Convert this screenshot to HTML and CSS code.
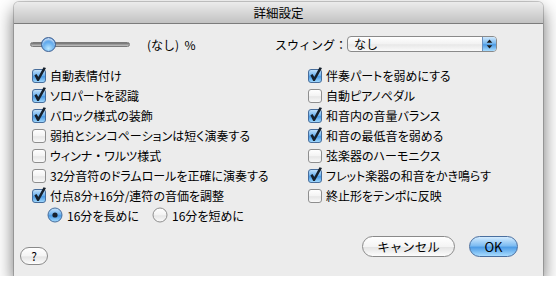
FILE: index.html
```html
<!DOCTYPE html>
<html lang="ja">
<head>
    <meta charset="UTF-8">
    <title>詳細設定</title>
    <link rel="stylesheet" href="styles.css">
</head>
<body>

<!-- 共通のアイコン -->
<svg class="defs" width="0" height="0">
    <defs>
        <linearGradient id="gBlue" x1="0" y1="0" x2="0" y2="1">
            <stop offset="0" stop-color="#c9e4fb"/>
            <stop offset="0.45" stop-color="#6eb2ee"/>
            <stop offset="0.55" stop-color="#4a9ae4"/>
            <stop offset="1" stop-color="#a6dcff"/>
        </linearGradient>
        <linearGradient id="gWhite" x1="0" y1="0" x2="0" y2="1">
            <stop offset="0" stop-color="#ffffff"/>
            <stop offset="0.5" stop-color="#f3f3f3"/>
            <stop offset="0.55" stop-color="#e6e6e6"/>
            <stop offset="1" stop-color="#fbfbfb"/>
        </linearGradient>
        <symbol id="cb-on" viewBox="0 0 16 16">
            <rect x="1.5" y="2.5" width="13" height="13" rx="2.5" fill="url(#gBlue)" stroke="#476d9b"/>
            <path d="M3.4 8.3 L5.5 7.1 L7.3 10 L12.5 0.2 L15 0.9 L7.8 14 L6.2 14 Z" fill="#16202c"/>
        </symbol>
        <symbol id="cb-off" viewBox="0 0 16 16">
            <rect x="1.5" y="2.5" width="13" height="13" rx="2.5" fill="url(#gWhite)" stroke="#8e8e8e"/>
        </symbol>
        <symbol id="rb-on" viewBox="0 0 16 16">
            <circle cx="8" cy="8" r="7" fill="url(#gBlue)" stroke="#476d9b"/>
            <circle cx="8" cy="8" r="2.6" fill="#16202c"/>
        </symbol>
        <symbol id="rb-off" viewBox="0 0 16 16">
            <circle cx="8" cy="8" r="7" fill="url(#gWhite)" stroke="#8e8e8e"/>
        </symbol>
    </defs>
</svg>

<div class="window">

    <!-- タイトルバー -->
    <div class="titlebar">詳細設定</div>

    <div class="content">

        <!-- スライダーとスウィング -->
        <div class="toprow">
            <div class="slidergroup">
                <div class="slider">
                    <div class="track"></div>
                    <div class="knob"></div>
                </div>
                <span class="slider-value">(なし)&nbsp;&nbsp;%</span>
            </div>
            <span class="swing-label">スウィング：</span>
            <div class="popup">
                <span class="popup-text">なし</span>
                <span class="popup-arrows">
                    <svg width="7" height="10" viewBox="0 0 7 10"><path d="M3.5 0.5 L6.3 3.8 L0.7 3.8 Z M3.5 9.5 L6.3 6.2 L0.7 6.2 Z" fill="#1a1a1a"/></svg>
                </span>
            </div>
        </div>

        <!-- チェックボックス -->
        <div class="cols">
            <div class="col">
                <label class="row"><svg class="box"><use href="#cb-on"/></svg>自動表情付け</label>
                <label class="row"><svg class="box"><use href="#cb-on"/></svg>ソロパートを認識</label>
                <label class="row"><svg class="box"><use href="#cb-on"/></svg>バロック様式の装飾</label>
                <label class="row"><svg class="box"><use href="#cb-off"/></svg>弱拍とシンコペーションは短く演奏する</label>
                <label class="row"><svg class="box"><use href="#cb-off"/></svg>ウィンナ<span class="dot">・</span>ワルツ様式</label>
                <label class="row"><svg class="box"><use href="#cb-off"/></svg>32分音符のドラムロールを正確に演奏する</label>
                <label class="row"><svg class="box"><use href="#cb-on"/></svg>付点8分+16分/連符の音価を調整</label>
                <div class="row radios">
                    <label class="radio"><svg class="box"><use href="#rb-on"/></svg>16分を長めに</label>
                    <label class="radio"><svg class="box"><use href="#rb-off"/></svg>16分を短めに</label>
                </div>
            </div>
            <div class="col">
                <label class="row"><svg class="box"><use href="#cb-on"/></svg>伴奏パートを弱めにする</label>
                <label class="row"><svg class="box"><use href="#cb-off"/></svg>自動ピアノペダル</label>
                <label class="row"><svg class="box"><use href="#cb-on"/></svg>和音内の音量バランス</label>
                <label class="row"><svg class="box"><use href="#cb-on"/></svg>和音の最低音を弱める</label>
                <label class="row"><svg class="box"><use href="#cb-off"/></svg>弦楽器のハーモニクス</label>
                <label class="row"><svg class="box"><use href="#cb-on"/></svg>フレット楽器の和音をかき鳴らす</label>
                <label class="row"><svg class="box"><use href="#cb-off"/></svg>終止形をテンポに反映</label>
            </div>
        </div>

        <!-- ボタン -->
        <div class="footer">
            <div class="btn help">?</div>
            <div class="spacer"></div>
            <div class="btn cancel">キャンセル</div>
            <div class="btn ok">OK</div>
        </div>

    </div>
</div>

</body>
</html>
```

FILE: styles.css
```css
body {
    margin: 0;
    background: #ffffff;
    font-family: "Noto Sans CJK JP", "Noto Sans", sans-serif;
    font-size: 12px;
    color: #000;
}

.defs {
    position: absolute;
}

/* ウィンドウ本体 */
.window {
    width: 529px;
    height: 274px;
    margin: 2px 0 0 14px;
    background: #ececec;
    border-radius: 5px 5px 0 0;
    box-shadow: 0 8px 18px rgba(0, 0, 0, 0.6), 0 0 0 1px rgba(0, 0, 0, 0.18);
    overflow: hidden;
}

.titlebar {
    height: 21px;
    line-height: 21px;
    text-align: center;
    font-size: 12.5px;
    background: linear-gradient(#ececec, #c2c2c2);
    border-bottom: 1px solid #7c7c7c;
}

/* 上の行 */
.toprow {
    display: flex;
    align-items: center;
    height: 16px;
    margin-top: 12px;
    padding-left: 16px;
}

.slidergroup {
    display: flex;
    align-items: center;
    width: 245px;
}

.slider {
    position: relative;
    width: 100px;
    height: 16px;
    margin-top: 2px;
}

.track {
    margin-top: 5px;
    height: 5px;
    border-radius: 3px;
    background: linear-gradient(#6e6e6e, #a4a4a4 60%, #c4c4c4);
    border: 1px solid #7a7a7a;
    box-sizing: border-box;
}

/* つまみ */
.knob {
    position: absolute;
    left: 11px;
    top: 0;
    width: 15px;
    height: 15px;
    box-sizing: border-box;
    border-radius: 50%;
    border: 1px solid #3c5f92;
    background: radial-gradient(circle at 50% 80%, #b9e6ff 0, #5aa6ec 55%, #2d72c8 100%);
    box-shadow: inset 0 2px 2px rgba(255, 255, 255, 0.7);
}

.slider-value {
    margin-left: 17px;
}

.swing-label {
    width: 72px;
}

/* ポップアップ */
.popup {
    display: flex;
    width: 150px;
    height: 16px;
    box-sizing: border-box;
    border: 1px solid #8a8a8a;
    border-radius: 4px;
    background: linear-gradient(#ffffff, #f2f2f2 50%, #e8e8e8 55%, #fafafa);
    overflow: hidden;
}

.popup-text {
    flex: 1;
    padding-left: 6px;
    line-height: 14px;
}

.popup-arrows {
    width: 13px;
    display: flex;
    align-items: center;
    justify-content: center;
    border-left: 1px solid #6a8fbd;
    background: linear-gradient(#cfe8fc, #79b9f0 45%, #4d9be4 55%, #a9ddff);
}

/* チェックボックスの列 */
.cols {
    display: grid;
    grid-template-columns: 276px 1fr;
    margin-top: 13px;
    padding-left: 17px;
    font-feature-settings: "palt";
}

.dot {
    font-feature-settings: normal;
}

.row {
    display: flex;
    align-items: center;
    height: 20px;
    white-space: nowrap;
}

.box {
    width: 16px;
    height: 16px;
    margin-right: 3px;
    flex: none;
}

.radios {
    padding-left: 16px;
}

.radio {
    display: flex;
    align-items: center;
    width: 105px;
}

.radio .box {
    margin-right: 4px;
}

/* ボタン */
.footer {
    display: flex;
    align-items: flex-start;
    height: 29px;
    margin-top: 11px;
    padding: 0 25px 0 6px;
}

.spacer {
    flex: 1;
}

.btn {
    box-sizing: border-box;
    height: 21px;
    line-height: 19px;
    text-align: center;
    border: 1px solid #8a8a8a;
    border-radius: 11px;
    background: linear-gradient(#ffffff, #f4f4f4 50%, #e4e4e4 55%, #fdfdfd);
    font-size: 12.5px;
}

.help {
    width: 28px;
    height: 18px;
    line-height: 16px;
    margin-top: 11px;
    border-radius: 9px;
    font-size: 12px;
}

.cancel {
    width: 93px;
    margin-right: 14px;
}

.ok {
    width: 49px;
    border-color: #4a6f9f;
    background: linear-gradient(#d4ecff, #7fbdf2 45%, #4f9de6 55%, #a8dcff);
    font-size: 13px;
}
```
